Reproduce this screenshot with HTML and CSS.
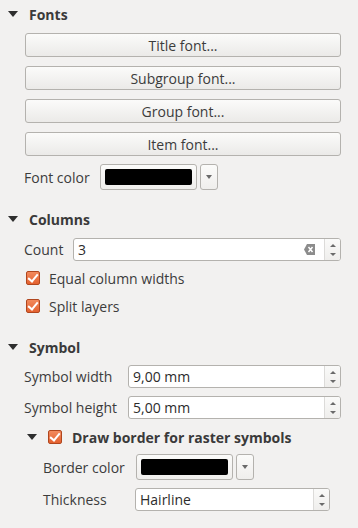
FILE: index.html
```html
<!DOCTYPE html>
<html lang="en">
<head>
    <meta charset="UTF-8">
    <title>Legend properties</title>
    <link rel="stylesheet" href="styles.css">
</head>
<body>
    <div class="panel">
        <div class="header">
            <span class="arrow"></span>
            <span class="title">Fonts</span>
        </div>
        <div class="buttons">
            <button class="btn">Title font...</button>
            <button class="btn">Subgroup font...</button>
            <button class="btn">Group font...</button>
            <button class="btn">Item font...</button>
        </div>
        <div class="row row-color">
            <span class="label">Font color</span>
            <span class="color-btn"><span class="swatch"></span></span>
            <span class="drop-btn"><span class="tri"></span></span>
        </div>

        <div class="header header-columns">
            <span class="arrow"></span>
            <span class="title">Columns</span>
        </div>
        <div class="row row-count">
            <span class="label">Count</span>
            <span class="spin spin-count">
                <span class="value">3</span>
                <span class="clear">
                    <svg width="11" height="11" viewBox="0 0 11 11">
                        <path d="M3 0h8v11H3L0 5.5z" fill="#8c8c8c"/>
                        <path d="M4.5 3l4 5M8.5 3l-4 5" stroke="#fff" stroke-width="1.5"/>
                    </svg>
                </span>
                <span class="arrows"><span class="up"></span><span class="down"></span></span>
            </span>
        </div>
        <div class="check-row check-first">
            <span class="check"></span>
            <span>Equal column widths</span>
        </div>
        <div class="check-row">
            <span class="check"></span>
            <span>Split layers</span>
        </div>

        <div class="header header-symbol">
            <span class="arrow"></span>
            <span class="title">Symbol</span>
        </div>
        <div class="row row-sym">
            <span class="label label-sym">Symbol width</span>
            <span class="spin spin-sym">
                <span class="value">9,00 mm</span>
                <span class="arrows"><span class="up"></span><span class="down"></span></span>
            </span>
        </div>
        <div class="row row-sym row-sym2">
            <span class="label label-sym">Symbol height</span>
            <span class="spin spin-sym">
                <span class="value">5,00 mm</span>
                <span class="arrows"><span class="up"></span><span class="down"></span></span>
            </span>
        </div>
        <div class="sub-header">
            <span class="arrow"></span>
            <span class="check"></span>
            <span class="title">Draw border for raster symbols</span>
        </div>
        <div class="row row-border">
            <span class="label label-sub">Border color</span>
            <span class="color-btn"><span class="swatch"></span></span>
            <span class="drop-btn"><span class="tri"></span></span>
        </div>
        <div class="row row-thick">
            <span class="label label-sub">Thickness</span>
            <span class="spin spin-thick">
                <span class="value">Hairline</span>
                <span class="arrows"><span class="up"></span><span class="down"></span></span>
            </span>
        </div>
    </div>
</body>
</html>
```

FILE: styles.css
```css
body {
    margin: 0;
    background-color: #f2f1f0;
    font-family: "Open Sans", "DejaVu Sans", sans-serif;
    font-size: 14px;
    color: #3c3c3c;
}
.panel {
    width: 358px;
    height: 528px;
}
.header {
    height: 28px;
    display: flex;
    align-items: center;
}
.arrow {
    width: 0;
    height: 0;
    margin-left: 8px;
    margin-right: 11px;
    border-left: 5px solid transparent;
    border-right: 5px solid transparent;
    border-top: 6px solid #2e2e2e;
}
.title {
    font-weight: bold;
    color: #3a3a3a;
}
.buttons {
    margin-top: 5px;
    padding-left: 25px;
    display: flex;
    flex-direction: column;
    gap: 9px;
}
.btn {
    width: 316px;
    height: 24px;
    padding: 0;
    font-family: inherit;
    font-size: 14px;
    color: #3c3c3c;
    border: 1px solid #b4b2ae;
    border-radius: 3px;
    background: linear-gradient(#fbfbfa, #ebeae8);
}
.row {
    display: flex;
    align-items: center;
    padding-left: 24px;
}
.label {
    white-space: nowrap;
}
.row-color {
    margin-top: 8px;
    height: 26px;
}
.row-color .label {
    width: 76px;
}
.color-btn {
    box-sizing: border-box;
    width: 97px;
    height: 26px;
    padding: 4px;
    border: 1px solid #b4b2ae;
    border-radius: 3px;
    background: linear-gradient(#fbfbfa, #efeeec);
}
.swatch {
    display: block;
    height: 100%;
    background: #000;
    border-radius: 2px;
}
.drop-btn {
    box-sizing: border-box;
    width: 18px;
    height: 26px;
    margin-left: 3px;
    border: 1px solid #b4b2ae;
    border-radius: 3px;
    background: linear-gradient(#fbfbfa, #efeeec);
    display: flex;
    align-items: center;
    justify-content: center;
}
.tri {
    width: 0;
    height: 0;
    border-left: 3.5px solid transparent;
    border-right: 3.5px solid transparent;
    border-top: 4px solid #6a6a6a;
}
.header-columns {
    margin-top: 15px;
}
.row-count {
    margin-top: 5px;
}
.row-count .label {
    width: 49px;
}
.spin {
    box-sizing: border-box;
    height: 23px;
    display: flex;
    align-items: stretch;
    background: #fff;
    border: 1px solid #b4b2ae;
    border-radius: 3px;
}
.spin .value {
    flex: 1;
    display: flex;
    align-items: center;
    padding-left: 4px;
    color: #2c2c2c;
}
.spin-count {
    width: 268px;
}
.clear {
    display: flex;
    align-items: center;
    padding-right: 9px;
}
.arrows {
    width: 15px;
    border-left: 1px solid #dcdbd9;
    background: linear-gradient(#fafaf9, #efeeec);
    border-radius: 0 2px 2px 0;
    display: flex;
    flex-direction: column;
    align-items: center;
    justify-content: center;
    gap: 6px;
}
.up, .down {
    width: 0;
    height: 0;
    border-left: 3px solid transparent;
    border-right: 3px solid transparent;
}
.up {
    border-bottom: 3px solid #6a6a6a;
}
.down {
    border-top: 3px solid #6a6a6a;
}
.check-row {
    display: flex;
    align-items: center;
    height: 20px;
    padding-left: 26px;
    margin-top: 8px;
}
.check-first {
    margin-top: 7px;
}
.check {
    box-sizing: border-box;
    width: 14px;
    height: 14px;
    margin-right: 9px;
    border: 1px solid #b0461e;
    border-radius: 2px;
    background: linear-gradient(#f28a5d, #e4612f);
    position: relative;
}
.check::after {
    content: "";
    position: absolute;
    left: 3px;
    top: 0px;
    width: 4px;
    height: 8px;
    border-right: 2px solid #fff;
    border-bottom: 2px solid #fff;
    transform: rotate(40deg);
}
.header-symbol {
    margin-top: 17px;
}
.row-sym {
    margin-top: 4px;
}
.row-sym2 {
    margin-top: 8px;
}
.label-sym {
    width: 104px;
}
.spin-sym {
    width: 213px;
}
.sub-header {
    display: flex;
    align-items: center;
    height: 20px;
    margin-top: 8px;
}
.sub-header .arrow {
    margin-left: 27px;
    margin-right: 11px;
}
.sub-header .check {
    margin-right: 10px;
}
.row-border {
    margin-top: 7px;
    height: 26px;
    padding-left: 43px;
}
.label-sub {
    width: 93px;
}
.row-thick {
    margin-top: 8px;
    padding-left: 43px;
}
.row-thick .label-sub {
    width: 92px;
}
.spin-thick {
    width: 195px;
}
```
